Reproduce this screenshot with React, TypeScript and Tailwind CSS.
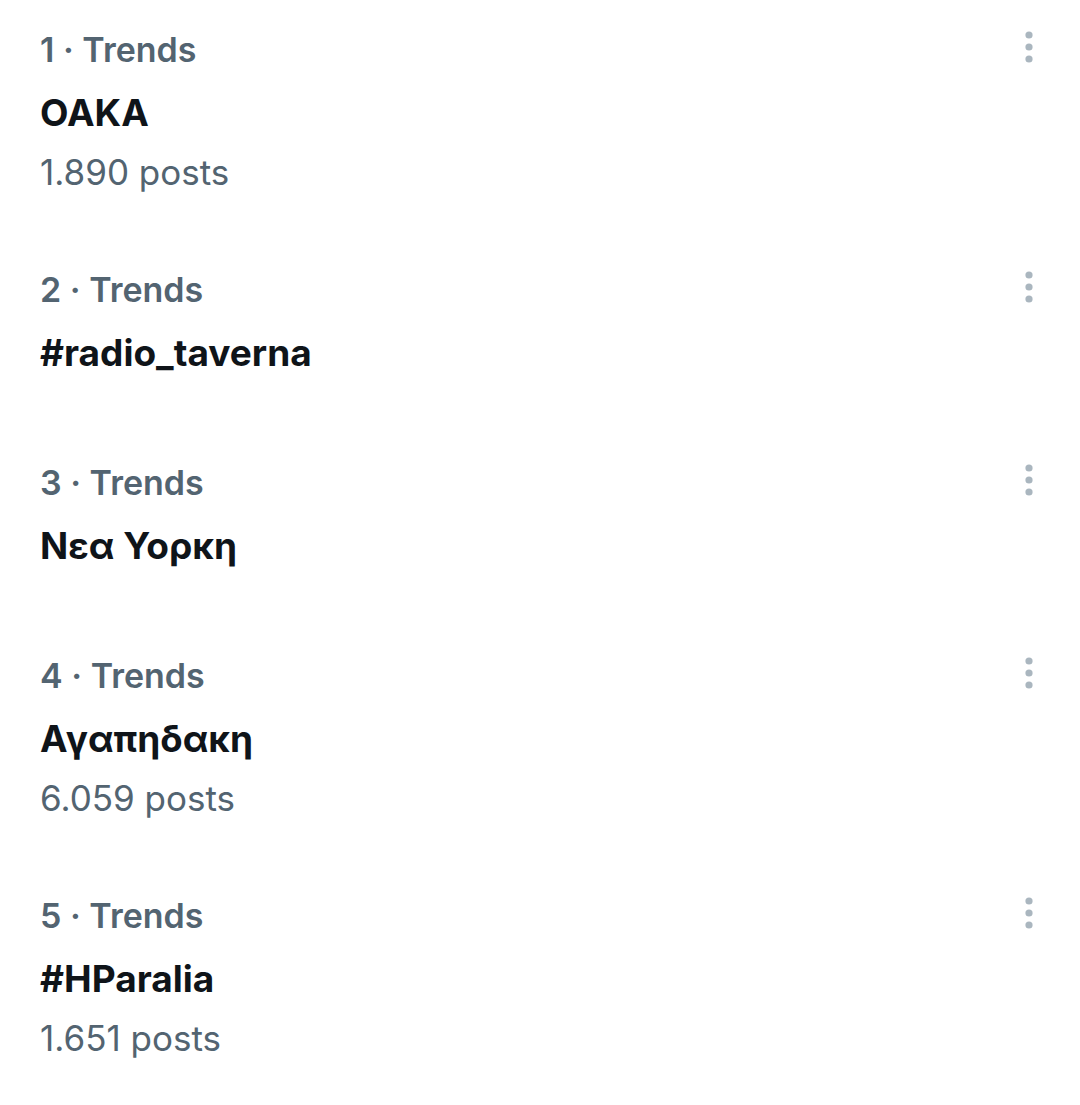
import React from "react";

type Trend = {
  rank: number;
  title: string;
  posts?: string;
};

const trends: Trend[] = [
  { rank: 1, title: "OAKA", posts: "1.890 posts" },
  { rank: 2, title: "#radio_taverna" },
  { rank: 3, title: "Νεα Υορκη" },
  { rank: 4, title: "Αγαπηδακη", posts: "6.059 posts" },
  { rank: 5, title: "#HParalia", posts: "1.651 posts" },
];

const MoreIcon = () => (
  <svg width="12" height="34" viewBox="0 0 12 34" fill="#aab6bf" aria-hidden="true">
    <circle cx="6" cy="5" r="3.6" />
    <circle cx="6" cy="17" r="3.6" />
    <circle cx="6" cy="29" r="3.6" />
  </svg>
);

const TrendRow = ({ trend }: { trend: Trend }) => (
  <div
    className={
      trend.posts
        ? "flex flex-col pl-[40px] pr-[45px] pt-[30px] pb-[48px]"
        : "flex flex-col pl-[40px] pr-[45px] pt-[30px] pb-[60px]"
    }
  >
    <div className="flex h-[40px] items-center justify-between">
      <span className="text-[34px] font-semibold leading-[40px] text-[#536471]">
        {trend.rank} · Trends
      </span>
      <button type="button" className="-mt-[6px] flex items-center" aria-label="More">
        <MoreIcon />
      </button>
    </div>
    <div className="mt-[23px] h-[40px] text-[37px] font-bold leading-[40px] text-[#0f1419]">
      {trend.title}
    </div>
    {trend.posts && (
      <div className="mt-[19px] h-[40px] text-[35px] leading-[40px] text-[#536471]">
        {trend.posts}
      </div>
    )}
  </div>
);

export default function App() {
  return (
    <div
      className="min-h-[1105px] w-[1080px] bg-white"
      style={{ fontFamily: "Inter, 'Noto Sans', 'Liberation Sans', sans-serif" }}
    >
      {trends.map((t) => (
        <TrendRow key={t.rank} trend={t} />
      ))}
    </div>
  );
}
